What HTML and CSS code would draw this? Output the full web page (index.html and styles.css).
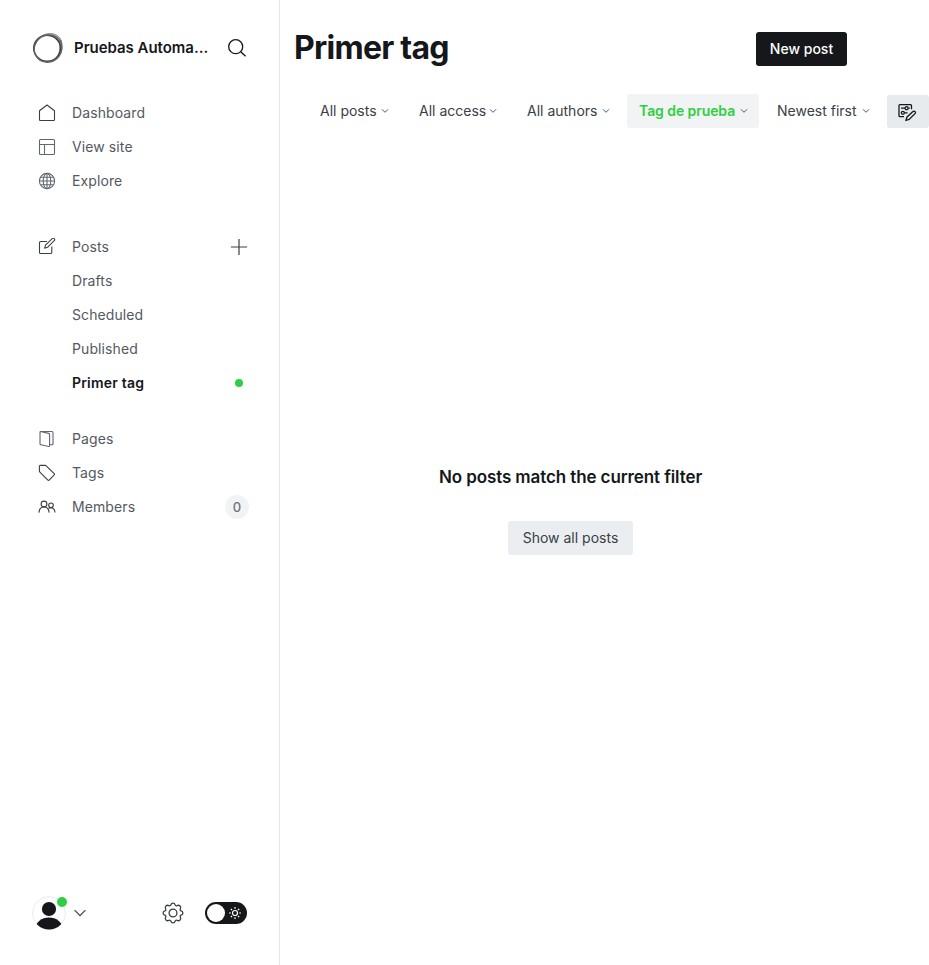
FILE: index.html
```html
<!DOCTYPE html>
<html lang="en">
<head>
<meta charset="utf-8">
<title>Posts</title>
<link rel="stylesheet" href="styles.css">
</head>
<body>
<div class="app">
  <nav class="sidebar">
    <header class="site">
      <svg class="site-logo" viewBox="0 0 32 32">
        <path d="M10 3.800C15 .6 24.500.2 28.500 7l1.500 4.500-3-2.800C23.500 4.500 17 2.800 10 3.800z" fill="#bbb" stroke="#777" stroke-width=".8"/>
        <path d="M28.800 8c3.300 8 .2 17-7.300 20.800 5-4.300 7.500-10.600 6-18z" fill="#aaa" stroke="#666" stroke-width=".8"/>
        <ellipse cx="15.200" cy="16.300" rx="13.400" ry="13" stroke="#444" stroke-width="1.600"/>
        <ellipse cx="15.700" cy="16.500" rx="14.200" ry="13.300" stroke="#666" stroke-width="1.200" transform="rotate(-42 16 16)"/>
      </svg>
      <span class="site-name">Pruebas Automa...</span>
      <svg class="search" viewBox="0 0 20 20"><circle cx="8.7" cy="8.7" r="7"/><path d="M13.7 13.7l4.9 4.6"/></svg>
    </header>

    <ul class="menu">
      <li><svg class="icon" viewBox="0 0 18 18"><path d="M1.500 6.800L9 1l7.500 5.800V15.700a.8.800 0 0 1-.8.800H2.300a.8.800 0 0 1-.8-.8z"/></svg><span>Dashboard</span></li>
      <li><svg class="icon muted" viewBox="0 0 18 18"><rect x="1.500" y="1.500" width="15" height="15" rx="1"/><path d="M1.500 6.500h15M6.500 6.500v10"/></svg><span>View site</span></li>
      <li><svg class="icon muted" viewBox="0 0 18 18"><circle cx="9" cy="9" r="7.600"/><ellipse cx="9" cy="9" rx="3.800" ry="7.600"/><path d="M9 1.400v15.200M1.400 9h15.200M2.500 5.200h13M2.500 12.800h13"/></svg><span>Explore</span></li>
    </ul>

    <ul class="menu posts">
      <li><svg class="icon" viewBox="0 0 18 18"><path d="M9 3.500H2.500a1 1 0 0 0-1 1v10a1 1 0 0 0 1 1h10.300a1 1 0 0 0 1-1V8.500M6.700 10.200l.8-3L14.200.700a1.400 1.400 0 0 1 2 2L9.600 9.300z"/></svg><span>Posts</span><svg class="plus" viewBox="0 0 18 18"><path d="M9 .9v16.200M.9 9h16.200"/></svg></li>
      <li class="sub">Drafts</li>
      <li class="sub">Scheduled</li>
      <li class="sub">Published</li>
      <li class="sub active"><span>Primer tag</span><i class="dot"></i></li>
    </ul>

    <ul class="menu manage">
      <li><svg class="icon muted" viewBox="0 0 18 18"><path d="M2.600 1.500H14a1 1 0 0 1 1 1v11.300a1 1 0 0 1-1 1h-2M2.600 1.500l8 1.900a1.300 1.300 0 0 1 1 1.200v11.200a.7.700 0 0 1-.9.700L3 14.800a1 1 0 0 1-1-1V2.200c0-.4.200-.7.600-.7z"/></svg><span>Pages</span></li>
      <li><svg class="icon" viewBox="0 0 18 18"><path d="M2.300 1.400H7.200a1.500 1.500 0 0 1 1 .4l8 7.800a.9.900 0 0 1 0 1.300l-5 5.200a.9.900 0 0 1-1.300 0L1.900 8.100a1.400 1.400 0 0 1-.5-1V2.300a.9.900 0 0 1 .9-.9z"/></svg><span>Tags</span></li>
      <li><svg class="icon" viewBox="0 0 18 18"><circle cx="6" cy="6" r="2.900"/><path d="M.9 14.600c.2-3.500 2.200-5.600 5.100-5.600s4.900 2.100 5.200 5.600"/><circle cx="13" cy="7.300" r="2.300"/><path d="M10.600 10.500c2.700-1.800 6.300-.3 6.400 4.100"/></svg><span>Members</span><b class="count">0</b></li>
    </ul>

    <footer class="account">
      <div class="avatar">
        <svg viewBox="0 0 34 34"><defs><clipPath id="avatar-clip"><circle cx="17" cy="17" r="16.500"/></clipPath></defs><circle cx="17" cy="17" r="16.400" fill="#fff" stroke="#e9ebed"/><g fill="#15171a" clip-path="url(#avatar-clip)"><circle cx="17" cy="13" r="7.100"/><ellipse cx="17" cy="32.500" rx="13.500" ry="11"/></g></svg>
        <i class="online"></i>
      </div>
      <svg class="caret" viewBox="0 0 12 8"><path d="M.6 1.200L6 6.600l5.400-5.400"/></svg>
      <svg class="gear" viewBox="0 0 22 22"><path d="M8.900 2.800 Q9.400 1.100 11 1.100 T13.100 2.800 Q13.600 4.300 15.100 3.600 Q16.800 2.800 18 4 T18.400 6.900 Q17.700 8.400 19.200 8.900 Q20.900 9.400 20.900 11 T19.200 13.100 Q17.700 13.600 18.400 15.100 Q19.200 16.800 18 18 T15.100 18.400 Q13.600 17.700 13.100 19.200 Q12.600 20.900 11 20.900 T8.900 19.200 Q8.400 17.700 6.900 18.400 Q5.200 19.200 4 18 T3.600 15.100 Q4.300 13.600 2.800 13.100 Q1.100 12.600 1.100 11 T2.800 8.900 Q4.300 8.400 3.600 6.900 Q2.800 5.200 4 4 T6.900 3.600 Q8.400 4.300 8.900 2.800z"/><circle cx="11" cy="11" r="3.900"/></svg>
      <div class="toggle"><i></i><svg viewBox="0 0 14 14"><circle cx="7" cy="7" r="2.500"/><path d="M7 1v1.800M7 11.200V13M1 7h1.800M11.200 7H13M2.800 2.800L4 4M10 10l1.200 1.200M2.800 11.200L4 10M10 4l1.200-1.200"/></svg></div>
    </footer>
  </nav>

  <main class="content">
    <header class="heading"><h1>Primer tag</h1><button class="new-post">New post</button></header>
    <div class="filters">
      <div class="filter type">All posts<svg viewBox="0 0 8 6"><path d="M1 1.300l3 3 3-3"/></svg></div>
      <div class="filter access">All access<svg viewBox="0 0 8 6"><path d="M1 1.300l3 3 3-3"/></svg></div>
      <div class="filter authors">All authors<svg viewBox="0 0 8 6"><path d="M1 1.300l3 3 3-3"/></svg></div>
      <div class="filter tag selected">Tag de prueba<svg viewBox="0 0 8 6"><path d="M1 1.300l3 3 3-3"/></svg></div>
      <div class="filter order">Newest first<svg viewBox="0 0 8 6"><path d="M1 1.300l3 3 3-3"/></svg></div>
      <button class="edit-view"><svg viewBox="0 0 20 20"><path d="M7 13.700H3a1 1 0 0 1-1-1V2.700a1 1 0 0 1 1-1h10.500a1 1 0 0 1 1 1v3.600M4 5.200h4M11.300 5.200h1.500M4 9.800h.3M7.600 9.800h3"/><circle cx="9.600" cy="5.200" r="1.500"/><circle cx="5.900" cy="9.800" r="1.500"/><path d="M9 17.300l.9-3.100 6-5.700a1.450 1.450 0 0 1 2.100 2.100l-5.900 5.900z"/></svg></button>
    </div>
    <section class="empty"><h2>No posts match the current filter</h2><button class="show-all">Show all posts</button></section>
  </main>
</div>
</body>
</html>
```
FILE: styles.css
```css
* { box-sizing: border-box; }
body { margin: 0; background: #fff; color: #15171a; font: 14px/20px Inter, sans-serif; overflow: hidden; }
h1, h2, ul { margin: 0; padding: 0; }
ul { list-style: none; }
svg { display: block; flex: none; fill: none; stroke: currentColor; }
button { border: 0; padding: 0; font: inherit; border-radius: 3px; }
.app { display: flex; height: 965px; }
.sidebar { display: flex; flex-direction: column; flex: none; width: 280px; border-right: 1px solid #e5e7e9; padding: 32px 30px 0 32px; }
.site { display: flex; align-items: center; height: 32px; margin-bottom: 32px; }
.site-logo { width: 32px; height: 32px; }
.site-name { margin-left: 10px; width: 152px; font-size: 15px; font-weight: 600; letter-spacing: -.03px; white-space: nowrap; }
.search { width: 20px; height: 20px; margin-left: 1px; stroke-width: 1.3; }
.menu { color: #54595f; font-size: 14px; letter-spacing: .1px; }
.menu li { display: flex; align-items: center; height: 34px; padding-left: 6px; }
.menu .icon { width: 18px; height: 18px; margin-right: 16px; stroke: #394047; stroke-width: 1.1; stroke-linejoin: round; }
.menu .muted { stroke: #60676e; }
.menu .sub { padding-left: 40px; }
.posts { margin-top: 32px; }
.manage { margin-top: 22px; }
.plus { width: 18px; height: 18px; margin: 0 1px 0 auto; stroke: #394047; stroke-width: 1.2; }
.menu .active { color: #15171a; font-weight: 600; letter-spacing: .2px; }
.dot { width: 8px; height: 8px; margin: 0 6px 0 auto; border-radius: 50%; background: #30cf43; }
.count { width: 24px; height: 24px; margin-left: auto; border-radius: 50%; background: #f1f3f5; color: #6b747e; font-size: 13px; line-height: 24px; font-weight: 500; text-align: center; }
.account { display: flex; align-items: center; height: 34px; margin: auto 0 35px; }
.avatar { position: relative; width: 34px; height: 34px; }
.avatar svg { width: 34px; height: 34px; stroke: none; }
.online { position: absolute; top: 1px; right: -1px; width: 10px; height: 10px; border-radius: 50%; background: #30cf43; }
.caret { width: 12px; height: 8px; margin-left: 8px; stroke: #394047; stroke-width: 1.2; }
.gear { width: 22px; height: 22px; margin-left: 76px; stroke: #394047; stroke-width: 1.3; }
.toggle { display: flex; align-items: center; width: 42px; height: 22px; margin-left: 21px; padding-left: 2px; border-radius: 11px; background: #15171a; }
.toggle i { width: 18px; height: 18px; border-radius: 50%; background: #fff; }
.toggle svg { width: 14px; height: 14px; margin-left: 3px; stroke: #fff; stroke-width: 1.2; }
.content { display: flex; flex-direction: column; flex: 1; min-width: 0; }
.heading { display: flex; align-items: center; justify-content: space-between; height: 34px; margin: 32px 82px 28px 14px; }
h1 { margin-top: -2px; font-size: 32px; line-height: 36px; font-weight: 700; letter-spacing: -.75px; }
.new-post { width: 91px; height: 34px; background: #15171a; color: #fff; font-weight: 500; }
.filters { display: flex; height: 34px; padding-left: 28px; color: #394047; }
.filter { display: flex; align-items: center; justify-content: space-between; padding: 0 14px 0 12px; border-radius: 3px; white-space: nowrap; }
.filter svg { width: 8px; height: 6px; margin-right: -3px; stroke: #54595f; }
.type { width: 92px; }
.access { width: 101px; margin-left: 7px; }
.authors { width: 106px; margin-left: 7px; }
.tag { width: 132px; margin-left: 6px; }
.order { width: 116px; margin-left: 6px; }
.selected { background: #f1f3f5; color: #30cf43; font-weight: 600; letter-spacing: -.08px; }
.edit-view { width: 42px; height: 33px; margin: 1px 0 0 auto; padding: 8px 11px; background: #e8ebee; color: #15171a; }
.edit-view svg { width: 20px; height: 20px; margin-left: -1px; stroke-width: 1.3; }
.empty { display: flex; flex-direction: column; align-items: center; margin: 337px 68px 0 0; }
h2 { font-size: 17px; line-height: 24px; font-weight: 600; letter-spacing: -.1px; }
.show-all { width: 125px; height: 34px; margin-top: 32px; background: #ebeef0; color: #394047; }
```
